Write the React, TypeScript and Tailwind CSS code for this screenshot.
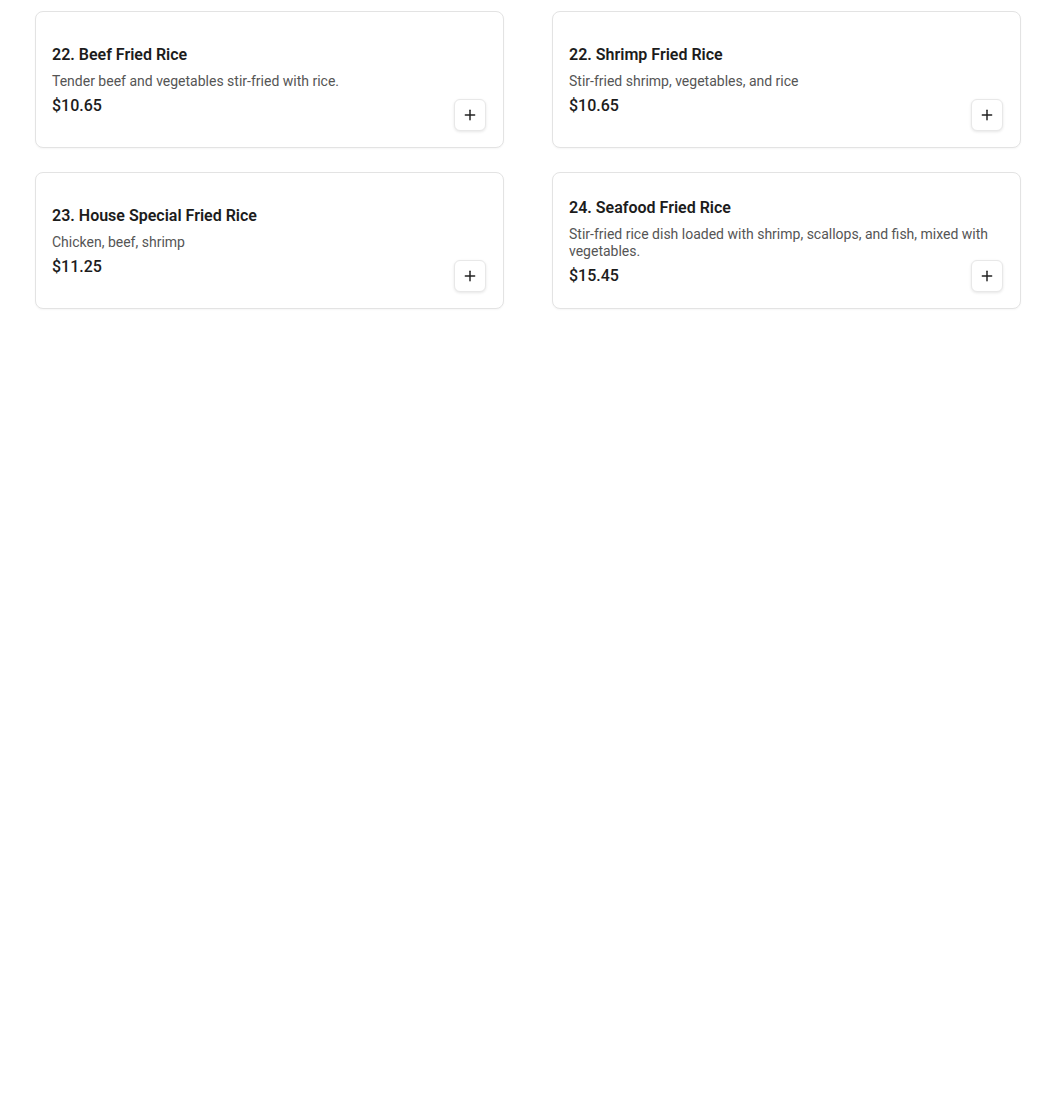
import React from "react";
import { Plus } from "lucide-react";

type Item = { title: string; desc: string; price: string };

const items: Item[] = [
  { title: "22. Beef Fried Rice", desc: "Tender beef and vegetables stir-fried with rice.", price: "$10.65" },
  { title: "22. Shrimp Fried Rice", desc: "Stir-fried shrimp, vegetables, and rice", price: "$10.65" },
  { title: "23. House Special Fried Rice", desc: "Chicken, beef, shrimp", price: "$11.25" },
  {
    title: "24. Seafood Fried Rice",
    desc: "Stir-fried rice dish loaded with shrimp, scallops, and fish, mixed with vegetables.",
    price: "$15.45",
  },
];

function Card({ item }: { item: Item }) {
  return (
    <div className="relative flex h-[137px] flex-col justify-center rounded-lg border border-[#e3e3e3] bg-white px-4 pt-[18px] pb-4 shadow-[0_1px_2px_rgba(0,0,0,0.04)]">
      <div className="mb-[6px] text-base leading-6 font-semibold text-[#1c1c1c]">{item.title}</div>
      <div className="text-sm leading-[17px] text-[#555]">{item.desc}</div>
      <div className="mt-1 text-base leading-6 font-medium text-[#1c1c1c]">{item.price}</div>
      <button className="absolute right-[17px] bottom-4 flex h-8 w-8 items-center justify-center rounded-md border border-[#e8e8e8] bg-white shadow-[0_1px_3px_rgba(0,0,0,0.1)]">
        <Plus size={16} strokeWidth={2.2} color="#222" />
      </button>
    </div>
  );
}

export default function App() {
  return (
    <div className="min-h-[1107px] bg-white" style={{ fontFamily: "Roboto, 'Liberation Sans', sans-serif" }}>
      <div className="grid w-[1021px] grid-cols-2 gap-x-12 gap-y-6 pl-[35px] pt-[11px]">
        {items.map((it) => (
          <Card key={it.title + it.price} item={it} />
        ))}
      </div>
    </div>
  );
}
